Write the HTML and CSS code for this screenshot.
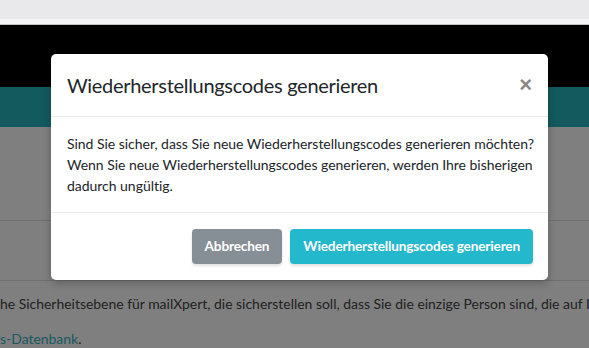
FILE: index.html
```html
<!DOCTYPE html>
<html lang="de">
<head>
    <meta charset="UTF-8">
    <meta name="viewport" content="width=device-width, initial-scale=1.0">
    <title>mailXpert - Zwei-Faktor-Authentifizierung</title>
    <link rel="stylesheet" href="styles.css">
</head>
<body>
    <div class="chrome"></div>

    <div class="page">
        <div class="navbar"></div>
        <div class="subnav"></div>
        <div class="section section-top"></div>
        <div class="section section-mid"></div>
        <div class="content">
            <p class="intro">he Sicherheitsebene für mailXpert, die sicherstellen soll, dass Sie die einzige Person sind, die auf Ihr Konto zugreifen kann.</p>
            <p class="intro"><a href="#">s-Datenbank</a>.</p>
        </div>

        <div class="backdrop">
            <div class="modal">
                <div class="modal-header">
                    <h5 class="modal-title">Wiederherstellungscodes generieren</h5>
                    <button class="close" type="button">&times;</button>
                </div>
                <div class="modal-body">
                    Sind Sie sicher, dass Sie neue Wiederherstellungscodes generieren möchten?<br>
                    Wenn Sie neue Wiederherstellungscodes generieren, werden Ihre bisherigen<br>
                    dadurch ungültig.
                </div>
                <div class="modal-footer">
                    <button class="btn btn-secondary" type="button">Abbrechen</button>
                    <button class="btn btn-info" type="button">Wiederherstellungscodes generieren</button>
                </div>
            </div>
        </div>
    </div>
</body>
</html>
```

FILE: styles.css
```css
body {
    font-family: Lato, "Liberation Sans", sans-serif;
    margin: 0;
    width: 589px;
    height: 348px;
    overflow: hidden;
    background-color: white;
    color: #444;
}

.chrome {
    height: 19px;
    background-color: #e9e9eb;
    border-bottom: 5px solid #f6f6f8;
    box-shadow: 0 1px 0 #c4c4c6;
}

.page {
    position: relative;
    height: 323px;
    margin-top: 1px;
}

.navbar {
    height: 62px;
    background-color: black;
}

.subnav {
    height: 40px;
    background-color: #26b4be;
}

.section {
    border-bottom: 1px solid #e0e0e0;
}

.section-top {
    height: 93px;
}

.section-mid {
    height: 59px;
}

.content {
    padding-top: 12px;
}

.intro {
    margin: 0 0 14px;
    font-size: 13.95px;
    line-height: 21px;
    white-space: nowrap;
    overflow: hidden;
}

.intro a {
    color: #34b4c0;
    text-decoration: none;
}

.backdrop {
    position: absolute;
    top: 0;
    left: 0;
    right: 0;
    bottom: 0;
    background-color: rgba(0,0,0,0.5);
}

.modal {
    width: 497px;
    margin: 29px 0 0 51px;
    background-color: white;
    border-radius: 5px;
    box-shadow: 0 3px 9px rgba(0,0,0,0.25);
    color: #212529;
}

.modal-header {
    display: flex;
    align-items: center;
    justify-content: space-between;
    padding: 16px;
    border-bottom: 1px solid #e9ecef;
}

.modal-title {
    margin: 0;
    font-size: 20px;
    font-weight: normal;
    line-height: 30px;
    letter-spacing: -0.3px;
}

.close {
    padding: 0;
    background: none;
    border: none;
    font-family: Arial, "Liberation Sans", sans-serif;
    font-size: 22px;
    font-weight: bold;
    line-height: 1;
    color: #888;
}

.modal-body {
    padding: 16px;
    font-size: 14px;
    line-height: 21px;
    letter-spacing: -0.03px;
    white-space: nowrap;
}

.modal-footer {
    display: flex;
    justify-content: flex-end;
    gap: 8px;
    padding: 16px 15px 16px 16px;
    border-top: 1px solid #e9ecef;
}

.btn {
    padding: 6px 12px;
    border: 1px solid transparent;
    border-radius: 4px;
    font-family: inherit;
    font-size: 13.6px;
    font-weight: bold;
    line-height: 21px;
    letter-spacing: -0.15px;
    color: white;
    box-shadow: 0 2px 3px rgba(0,0,0,0.12);
}

.btn-secondary {
    background-color: #868e96;
}

.btn-info {
    background-color: #23b8cc;
}
```
